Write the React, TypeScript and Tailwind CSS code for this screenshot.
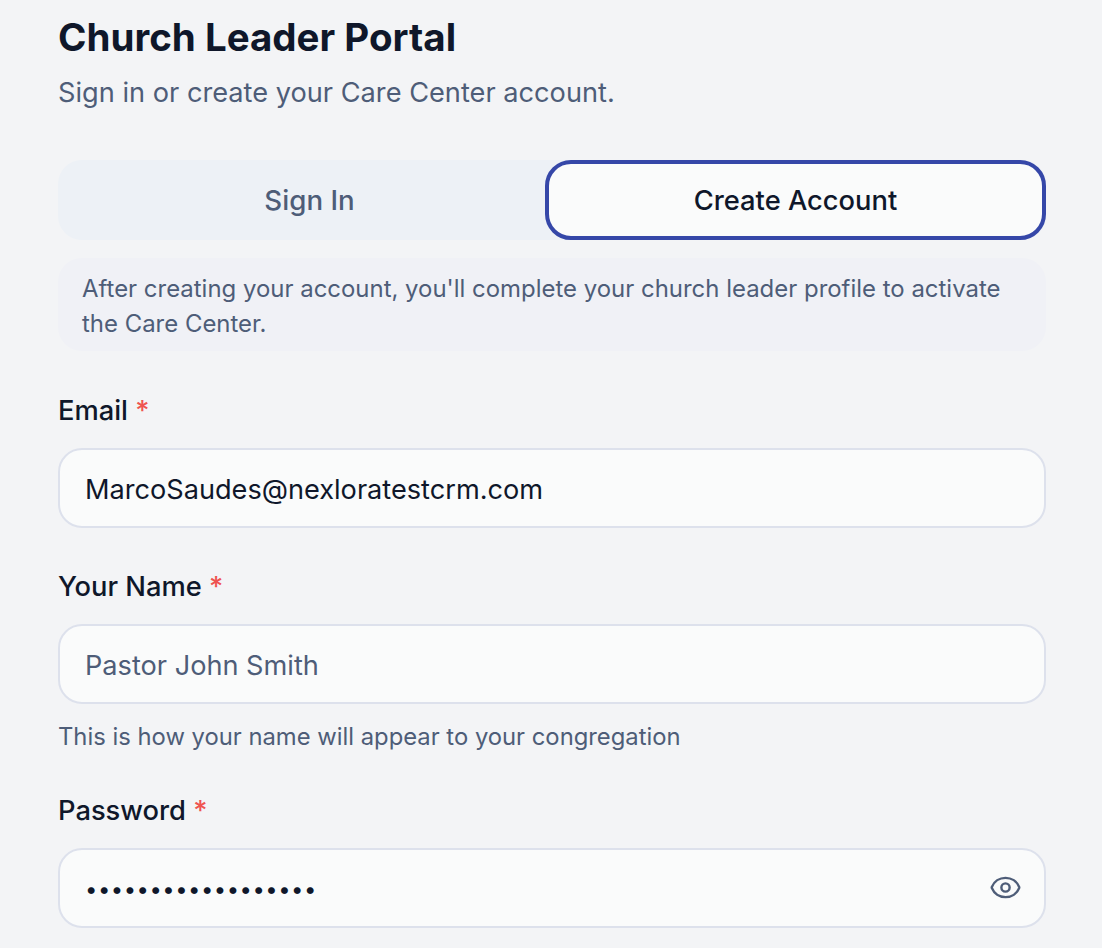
import { Eye } from "lucide-react";

const font = "font-['Inter',sans-serif]";

function Label({ text }: { text: string }) {
  return (
    <label className="block text-[27.3px] leading-[36px] font-medium text-[#0f172a]">
      {text} <span className="text-[#ef5350]">*</span>
    </label>
  );
}

const inputCls =
  "block w-full h-[80px] rounded-[24px] border-2 border-[#dde1ec] bg-[#fafbfb] pl-[25px] pr-[24px] pt-[2px] text-[27.15px] text-[#0f172a] placeholder:text-[#4e5d78] outline-none";

export default function App() {
  return (
    <div className={`${font} w-[1102px] h-[948px] overflow-hidden bg-[#f3f4f6] pl-[58px] pr-[56px] pt-[11px]`}>
      <h1 className="text-[38.5px] leading-[52px] font-bold text-[#0f172a]">Church Leader Portal</h1>
      <p className="mt-[5px] text-[27.2px] leading-[50px] text-[#4e5d78]">Sign in or create your Care Center account.</p>

      <div className="mt-[42px] grid grid-cols-[487px_501px] h-[80px] rounded-[24px] bg-[#edf1f6]">
        <button className="pl-[16px] pt-[2px] text-[27.7px] font-medium text-[#4e5d78]">Sign In</button>
        <button className="pt-[2px] text-[27.3px] font-medium text-[#0f172a] bg-[#fafbfb] rounded-[26px] border-[4px] border-[#3547a8]">Create Account</button>
      </div>

      <div className="mt-[18px] h-[93px] rounded-[24px] bg-[#f0f1f6] px-[24px] pt-[13px] text-[23.95px] leading-[35px] text-[#4e5d78]">
        After creating your account, you'll complete your church leader profile to activate the Care Center.
      </div>

      <div className="mt-[42px]">
        <Label text="Email" />
        <input className={`${inputCls} mt-[19px]`} readOnly value="MarcoSaudes@nexloratestcrm.com" />
      </div>

      <div className="mt-[41px]">
        <Label text="Your Name" />
        <input className={`${inputCls} mt-[19px]`} readOnly placeholder="Pastor John Smith" />
        <p className="mt-[15px] text-[23.8px] leading-[36px] text-[#4e5d78]">This is how your name will appear to your congregation</p>
      </div>

      <div className="mt-[38px]">
        <Label text="Password" />
        <div className="relative mt-[19px]">
          <input className={`${inputCls} !text-[22px] tracking-[0.5px]`} type="password" readOnly value="abcdefghijklmnopqr" />
          <Eye className="absolute right-[24px] top-[23px] text-[#4e5d78]" size={33} strokeWidth={1.75} />
        </div>
      </div>
    </div>
  );
}
